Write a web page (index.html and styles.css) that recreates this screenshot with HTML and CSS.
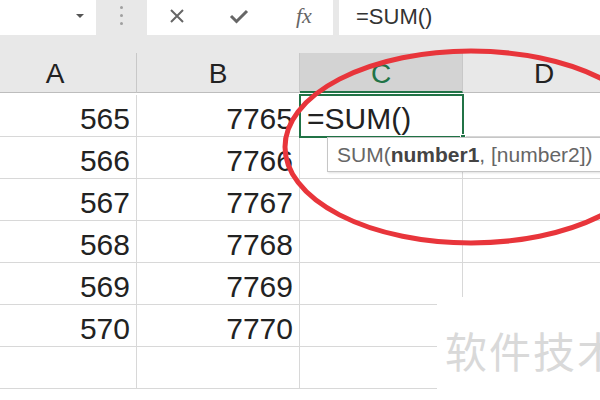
FILE: index.html
```html
<!DOCTYPE html>
<html lang="zh-CN">
<head>
  <meta charset="UTF-8" />
  <title>SUM</title>
  <link rel="stylesheet" href="styles.css">
</head>
<body>

  <div class="window">

    <div class="toolbar">
      <div class="name-box">
        <svg class="drop" width="10" height="6" viewBox="0 0 10 6"><path d="M1 1 L9 1 L5 5 Z" fill="#555"/></svg>
      </div>
      <div class="grip"><span></span><span></span><span></span></div>
      <div class="fx-buttons">
        <svg class="icon" width="18" height="18" viewBox="0 0 18 18"><path d="M3 3 L15 15 M15 3 L3 15" stroke="#666" stroke-width="2" fill="none"/></svg>
        <svg class="icon" width="20" height="18" viewBox="0 0 20 18"><path d="M2 9 L7.5 14.5 L18 4" stroke="#666" stroke-width="3" fill="none"/></svg>
        <span class="fx">fx</span>
      </div>
      <div class="formula">=SUM()</div>
    </div>

    <div class="band"></div>

    <div class="sheet">
      <div class="head">A</div>
      <div class="head">B</div>
      <div class="head active">C</div>
      <div class="head">D</div>

      <div class="cell num">565</div>
      <div class="cell num">7765</div>
      <div class="cell selected">=SUM()<span class="handle"></span></div>
      <div class="cell"></div>

      <div class="cell num">566</div>
      <div class="cell num">7766</div>
      <div class="cell"></div>
      <div class="cell"></div>

      <div class="cell num">567</div>
      <div class="cell num">7767</div>
      <div class="cell"></div>
      <div class="cell"></div>

      <div class="cell num">568</div>
      <div class="cell num">7768</div>
      <div class="cell"></div>
      <div class="cell"></div>

      <div class="cell num">569</div>
      <div class="cell num">7769</div>
      <div class="cell"></div>
      <div class="cell"></div>

      <div class="cell num">570</div>
      <div class="cell num">7770</div>
      <div class="cell"></div>
      <div class="cell"></div>

      <div class="cell"></div>
      <div class="cell"></div>
      <div class="cell"></div>
      <div class="cell"></div>
    </div>

    <div class="tip">SUM(<b>number1</b>, [number2])</div>

    <div class="watermark">软件技术</div>

    <svg class="circle" width="600" height="400" viewBox="0 0 600 400">
      <ellipse cx="471" cy="147" rx="186" ry="96" fill="none" stroke="#e8353b" stroke-width="5"/>
    </svg>

  </div>

</body>
</html>
```

FILE: styles.css
```css
* {
  box-sizing: border-box;
  margin: 0;
  padding: 0;
}

body {
  font-family: 'Liberation Sans', Arial, sans-serif;
  background: #fff;
}

.window {
  position: relative;
  width: 600px;
  height: 400px;
  overflow: hidden;
  background: #fff;
}

.toolbar {
  display: flex;
  height: 35px;
  background: #e8e8e8;
}

.name-box {
  width: 96px;
  background: #fff;
  display: flex;
  justify-content: flex-end;
  align-items: center;
  padding-right: 11px;
  padding-bottom: 3px;
}

.grip {
  width: 51px;
  display: flex;
  flex-direction: column;
  align-items: center;
  gap: 5px;
  padding-top: 6px;
}

.grip span {
  width: 3px;
  height: 3px;
  border-radius: 50%;
  background: #a0a0a0;
}

.fx-buttons {
  width: 186px;
  background: #fff;
  display: flex;
  align-items: center;
  padding-left: 21px;
  padding-bottom: 4px;
  gap: 43px;
}

.fx {
  font-family: 'Liberation Serif', 'DejaVu Serif', serif;
  font-style: italic;
  font-size: 22px;
  color: #666;
  margin-left: 4px;
}

.formula {
  flex: 1;
  margin-left: 6px;
  background: #fff;
  font-size: 22px;
  color: #333;
  padding-left: 17px;
  line-height: 33px;
}

.band {
  height: 18px;
  background: #e8e8e8;
}

.sheet {
  display: grid;
  grid-template-columns: repeat(4, 163px);
  grid-auto-rows: 42px;
  margin-left: -26px;
}

.head {
  height: 40px;
  background: #e8e8e8;
  border-right: 1px solid #c8c8c8;
  border-bottom: 1px solid #bdbdbd;
  text-align: center;
  font-size: 28px;
  line-height: 42px;
  color: #222;
}

.head.active {
  background: #d3d3d3;
  color: #217346;
  border-bottom: 2px solid #217346;
}

.cell {
  border-right: 1px solid #d8d8d8;
  border-bottom: 1px solid #d8d8d8;
  font-size: 30px;
  color: #222;
  display: flex;
  align-items: flex-end;
  padding: 0 6px 0 7px;
}

.num {
  justify-content: flex-end;
}

.selected {
  position: relative;
  outline: 2px solid #217346;
  outline-offset: -1px;
  color: #222;
}

.handle {
  position: absolute;
  right: -4px;
  bottom: -4px;
  width: 6px;
  height: 6px;
  background: #217346;
  border: 1px solid #fff;
}

.tip {
  position: absolute;
  left: 327px;
  top: 137px;
  height: 35px;
  width: 300px;
  background: #fff;
  border: 1px solid #c6c6c6;
  box-shadow: 1px 1px 2px rgba(0, 0, 0, 0.12);
  font-size: 21px;
  line-height: 33px;
  padding-left: 9px;
  color: #666;
  white-space: nowrap;
}

.tip b {
  color: #444;
}

.watermark {
  position: absolute;
  left: 437px;
  top: 297px;
  width: 200px;
  height: 110px;
  background: #fff;
  padding: 22px 0 0 8px;
  font-family: 'Noto Sans CJK SC', sans-serif;
  font-size: 42px;
  color: #d9d9d9;
  letter-spacing: 2px;
  white-space: nowrap;
}

.circle {
  position: absolute;
  left: 0;
  top: 0;
}
```
